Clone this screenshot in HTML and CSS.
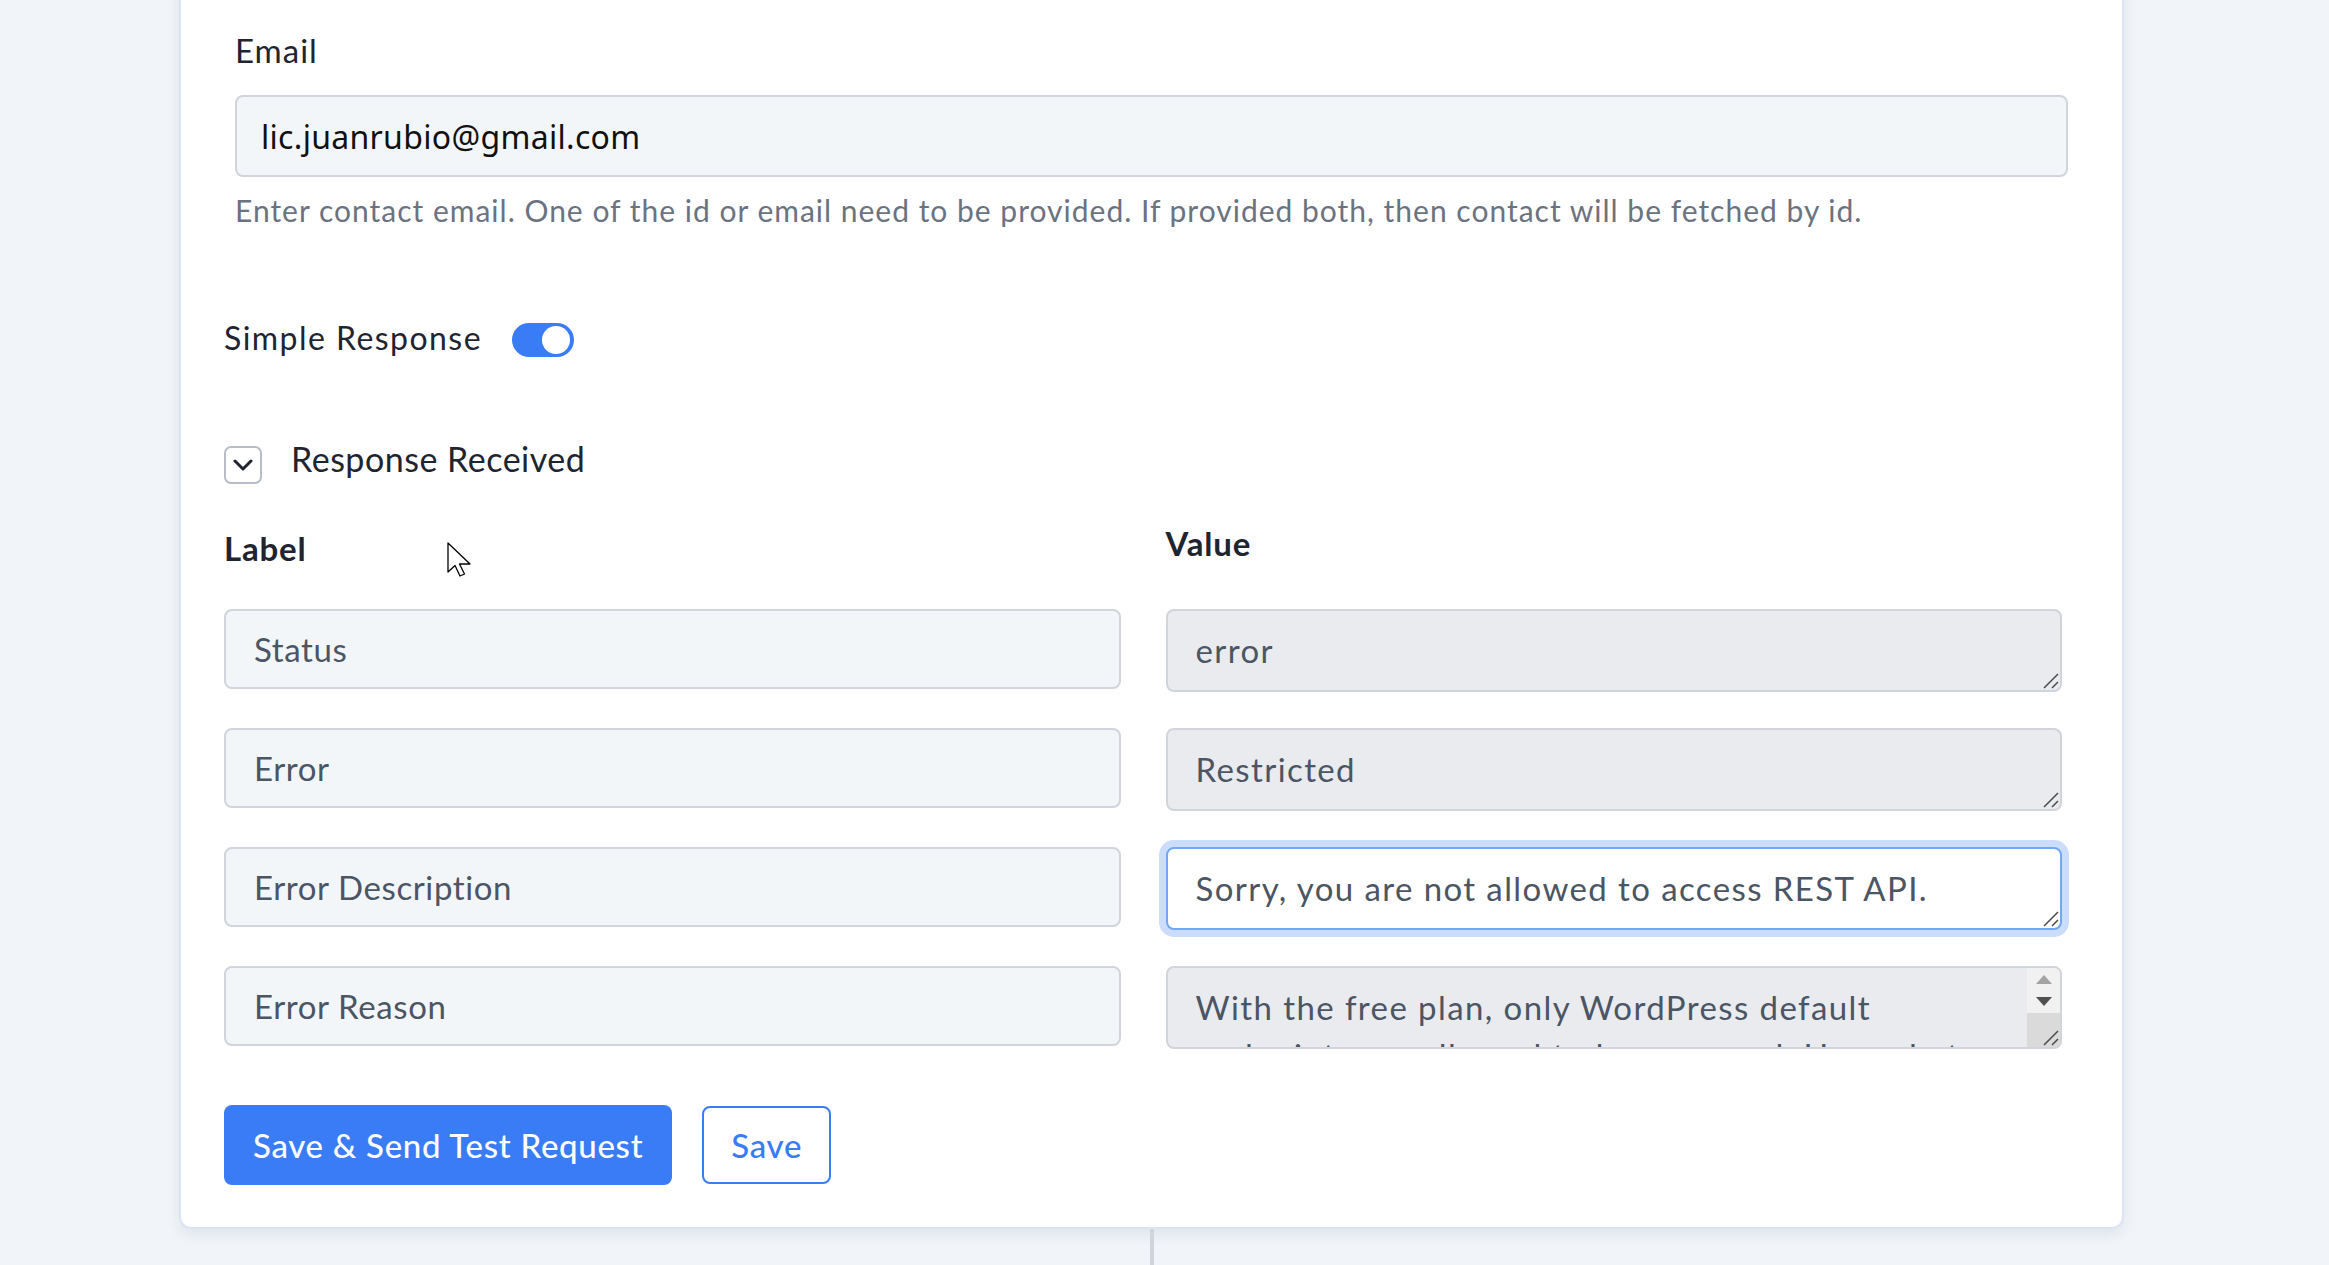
FILE: index.html
```html
<!DOCTYPE html>
<html lang="en">
<head>
  <meta charset="UTF-8" />
  <title>Get Contact – Step Settings</title>
  <link rel="stylesheet" href="styles.css">
</head>
<body>

<div class="canvas">
  <section class="card">

    <div class="field">
      <label class="field-label" for="contactEmail">Email</label>
      <input type="text" id="contactEmail" class="text-input" value="lic.juanrubio@gmail.com" />
      <p class="field-help">Enter contact email. One of the id or email need to be provided. If provided both, then contact will be fetched by id.</p>
    </div>

    <div class="switch-row">
      <span class="switch-label">Simple Response</span>
      <span class="switch is-on"><span class="switch-knob"></span></span>
    </div>

    <div class="collapse-row">
      <button class="collapse-btn" type="button" aria-label="Collapse">
        <svg width="20" height="12" viewBox="0 0 20 12"><path d="M2 2 L10 10 L18 2" fill="none" stroke="#1f2430" stroke-width="3" stroke-linecap="round" stroke-linejoin="round"/></svg>
      </button>
      <span class="collapse-title">Response Received</span>
    </div>

    <!-- response mapping: label on the left, returned value on the right -->
    <div class="map-grid">
      <div class="map-head map-head-label">Label</div>
      <div class="map-head map-head-value">Value</div>

      <input type="text" class="map-key" value="Status" readonly />
      <div class="map-value">
        <textarea class="map-text" readonly>error</textarea>
        <svg class="grip" width="16" height="16" viewBox="0 0 16 16"><path d="M1 15 L15 1 M9 15 L15 9" stroke="#4a4a4a" stroke-width="1.5"/></svg>
      </div>

      <input type="text" class="map-key" value="Error" readonly />
      <div class="map-value">
        <textarea class="map-text" readonly>Restricted</textarea>
        <svg class="grip" width="16" height="16" viewBox="0 0 16 16"><path d="M1 15 L15 1 M9 15 L15 9" stroke="#4a4a4a" stroke-width="1.5"/></svg>
      </div>

      <input type="text" class="map-key" value="Error Description" readonly />
      <div class="map-value">
        <textarea class="map-text is-focused" readonly>Sorry, you are not allowed to access REST API.</textarea>
        <svg class="grip" width="16" height="16" viewBox="0 0 16 16"><path d="M1 15 L15 1 M9 15 L15 9" stroke="#4a4a4a" stroke-width="1.5"/></svg>
      </div>

      <input type="text" class="map-key" value="Error Reason" readonly />
      <div class="map-value">
        <textarea class="map-text has-scroll" readonly>With the free plan, only WordPress default endpoints are allowed to be accessed. Upgrade to unlock all endpoints.</textarea>
        <div class="scrollbar">
          <div class="scroll-buttons">
            <span class="arrow-up"></span>
            <span class="arrow-down"></span>
          </div>
          <div class="scroll-thumb"></div>
        </div>
        <svg class="grip" width="16" height="16" viewBox="0 0 16 16"><path d="M1 15 L15 1 M9 15 L15 9" stroke="#4a4a4a" stroke-width="1.5"/></svg>
      </div>
    </div>

    <div class="actions">
      <button class="btn btn-primary" type="button">Save &amp; Send Test Request</button>
      <button class="btn btn-outline" type="button">Save</button>
    </div>

  </section>
  <div class="connector"></div>
</div>

<svg class="pointer" width="26" height="37" viewBox="0 0 26 37">
  <path d="M1 1 L1 30 L8 23.5 L13 34 L17.5 32 L12.5 22 L23 22 Z" fill="#fff" stroke="#000" stroke-width="1.3" stroke-linejoin="round"/>
</svg>

</body>
</html>
```

FILE: styles.css
```css
body {
  margin: 0;
  background-color: #f1f5f9;
  font-family: Lato, "Noto Sans", sans-serif;
  color: #1e2430;
  overflow: hidden;
}

.canvas {
  width: 100%;
}

.card {
  box-sizing: border-box;
  width: 1945px;
  margin: -40px 0 0 179px;
  padding: 64px 54px 42px 43px;
  background-color: white;
  border: 2px solid #dbe3f5;
  border-radius: 12px;
  box-shadow: 0 6px 14px rgba(30, 41, 59, 0.08);
}

/* email field */
.field {
  margin-left: 11px;
}

.field-label {
  display: block;
  font-size: 33px;
  line-height: 48px;
  letter-spacing: 1px;
  color: #1e2430;
}

.text-input {
  display: block;
  box-sizing: border-box;
  width: 100%;
  height: 82px;
  margin-top: 21px;
  padding: 0 24px;
  border: 2px solid #d1d5db;
  border-radius: 8px;
  background-color: #f3f6f9;
  font-family: "Noto Sans", sans-serif;
  font-size: 32px;
  letter-spacing: 0.3px;
  color: #111;
  outline: none;
}

.field-help {
  margin: 11px 0 0;
  font-size: 30px;
  line-height: 45px;
  letter-spacing: 1px;
  color: #6b7280;
}

/* toggle */
.switch-row {
  display: flex;
  align-items: center;
  gap: 30px;
  margin-top: 82px;
}

.switch-label {
  font-size: 32px;
  line-height: 46px;
  letter-spacing: 1.45px;
}

.switch {
  position: relative;
  width: 62px;
  height: 34px;
  border-radius: 17px;
  background-color: #3a7bf6;
  margin-top: 4px;
}

.switch-knob {
  position: absolute;
  top: 3px;
  right: 4px;
  width: 28px;
  height: 28px;
  border-radius: 50%;
  background-color: white;
}

/* collapsible section header */
.collapse-row {
  display: flex;
  align-items: flex-start;
  gap: 29px;
  margin-top: 73px;
}

.collapse-btn {
  box-sizing: border-box;
  display: flex;
  align-items: center;
  justify-content: center;
  width: 38px;
  height: 38px;
  margin-top: 12px;
  padding: 0;
  border: 2px solid #b7bcc5;
  border-radius: 7px;
  background: white;
}

.collapse-title {
  font-size: 34px;
  line-height: 50px;
  letter-spacing: 0.5px;
}

/* label / value mapping */
.map-grid {
  display: grid;
  grid-template-columns: 1fr 1fr;
  column-gap: 45px;
  row-gap: 36px;
  margin: 35px 6px 0 0;
}

.map-head {
  font-size: 33px;
  line-height: 48px;
  font-weight: bold;
  letter-spacing: 0.8px;
  color: #1e2430;
}

.map-head-label {
  padding: 5px 0 1px;
}

.map-key {
  box-sizing: border-box;
  width: 100%;
  height: 80px;
  padding: 0 28px;
  border: 2px solid #d1d5db;
  border-radius: 8px;
  background-color: #f3f6f9;
  font-family: Lato, sans-serif;
  font-size: 33px;
  letter-spacing: 0.6px;
  color: #4b5563;
  outline: none;
}

.map-value {
  position: relative;
  height: 83px;
}

.map-text {
  display: block;
  box-sizing: border-box;
  width: 100%;
  height: 83px;
  padding: 15px 28px 16px;
  border: 2px solid #d1d5db;
  border-radius: 8px;
  background-color: #e9ebef;
  font-family: Lato, sans-serif;
  font-size: 33px;
  line-height: 48px;
  letter-spacing: 1.4px;
  color: #4b5563;
  resize: none;
  overflow: hidden;
  outline: none;
}

.map-text.is-focused {
  background-color: white;
  border-color: #72a6f7;
  box-shadow: 0 0 0 7px #cbdcfc;
}

.map-text.has-scroll {
  padding-right: 61px;
}

.grip {
  position: absolute;
  right: 3px;
  bottom: 3px;
}

/* scrollbar of the long reason text */
.scrollbar {
  position: absolute;
  top: 2px;
  right: 2px;
  bottom: 2px;
  width: 33px;
  display: flex;
  flex-direction: column;
  border-radius: 0 6px 6px 0;
  overflow: hidden;
}

.scroll-buttons {
  height: 45px;
  display: flex;
  flex-direction: column;
  align-items: center;
  justify-content: center;
  gap: 13px;
  background-color: #f1f1f1;
}

.arrow-up {
  width: 0;
  height: 0;
  border-left: 8px solid transparent;
  border-right: 8px solid transparent;
  border-bottom: 9px solid #a3a3a3;
}

.arrow-down {
  width: 0;
  height: 0;
  border-left: 8px solid transparent;
  border-right: 8px solid transparent;
  border-top: 9px solid #505050;
}

.scroll-thumb {
  flex: 1;
  background-color: #dadada;
}

/* buttons */
.actions {
  display: flex;
  align-items: center;
  gap: 30px;
  margin-top: 56px;
}

.btn {
  box-sizing: border-box;
  height: 80px;
  border-radius: 8px;
  font-family: Lato, sans-serif;
  font-size: 33px;
  font-weight: 500;
  letter-spacing: 0.7px;
  cursor: pointer;
}

.btn-primary {
  padding: 0 29px;
  border: none;
  background-color: #3a7bf6;
  color: white;
}

.btn-outline {
  height: 78px;
  padding: 0 27px;
  border: 2px solid #3a7bf6;
  background-color: white;
  color: #3a7bf6;
}

.connector {
  width: 4px;
  height: 60px;
  margin-left: 1150px;
  background-color: #d1d5db;
}

.pointer {
  position: absolute;
  left: 447px;
  top: 542px;
}
```
